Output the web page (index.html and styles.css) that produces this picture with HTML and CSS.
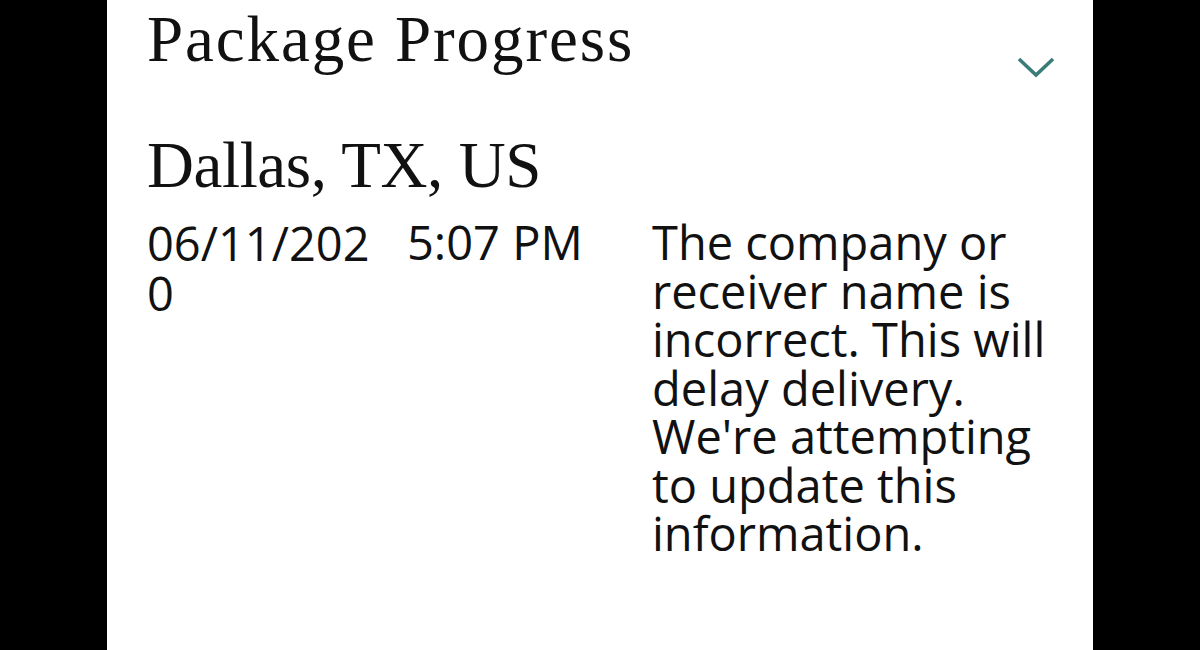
FILE: index.html
```html
<!DOCTYPE html>
<html lang="en">
<head>
    <meta charset="UTF-8">
    <meta name="viewport" content="width=device-width, initial-scale=1.0">
    <title>Package Progress</title>
    <link rel="stylesheet" href="styles.css">
</head>
<body>
    <main class="panel">
        <header class="panel-head">
            <h1 class="panel-title">Package Progress</h1>
            <button class="toggle" aria-label="Collapse">
                <svg width="38" height="22" viewBox="0 0 38 22">
                    <polyline points="2,3 19,19 36,3" fill="none" stroke="#3b7c78" stroke-width="3.6"/>
                </svg>
            </button>
        </header>

        <section class="event">
            <h2 class="event-place">Dallas, TX, US</h2>
            <div class="event-row">
                <span class="event-date">06/11/2020</span>
                <span class="event-time">5:07 PM</span>
                <p class="event-text">The company or receiver name is incorrect. This will delay delivery. We're attempting to update this information.</p>
            </div>
        </section>
    </main>
</body>
</html>
```

FILE: styles.css
```css
html, body {
    margin: 0;
    padding: 0;
    height: 100%;
    background: #000;
}

body {
    display: flex;
    justify-content: center;
}

.panel {
    width: 986px;
    height: 100%;
    background: #fff;
    box-sizing: border-box;
    padding: 0 38px 0 40px;
    color: #111;
}

.panel-head {
    display: flex;
    justify-content: space-between;
    align-items: flex-start;
}

.panel-title {
    margin: -2px 0 0;
    font-family: "Liberation Serif", serif;
    font-weight: 400;
    font-size: 65px;
    line-height: 82px;
    letter-spacing: 1.9px;
}

.toggle {
    margin-top: 56px;
    padding: 0;
    border: 0;
    background: none;
    display: flex;
}

.event-place {
    margin: 44px 0 0;
    font-family: "Liberation Serif", serif;
    font-weight: 400;
    font-size: 65px;
    line-height: 82px;
    letter-spacing: -0.4px;
}

.event-row {
    display: grid;
    grid-template-columns: 240px 225px 412px;
    column-gap: 20px;
    margin-top: 12px;
    font-family: "Open Sans", sans-serif;
    font-size: 47px;
    line-height: 48.5px;
}

.event-date {
    word-break: break-all;
    line-height: 50px;
}

.event-text {
    margin: 0;
}
```
